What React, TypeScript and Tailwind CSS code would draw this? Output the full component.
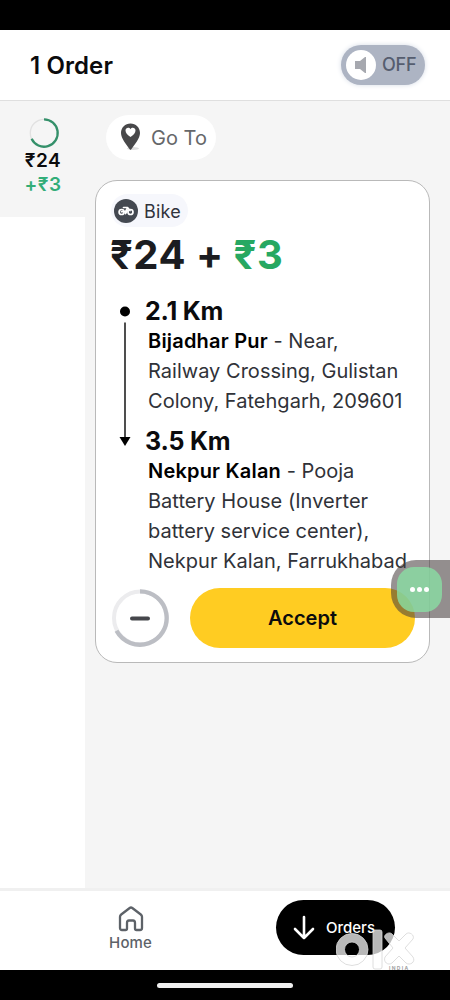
const ADDRESS = "whitespace-nowrap pl-[3px] text-[20px] leading-[30px] tracking-[0.02px] text-[#303238]";
const PLACE = "font-semibold tracking-[0.2px] text-black";
const DISTANCE = "text-[25px] font-bold leading-[30px] tracking-[-0.2px]";

function MapPin() {
  return (
    <svg width="22" height="28" viewBox="0 0 22 28" className="-mt-0.5 shrink-0">
      <ellipse cx="13" cy="25.500" rx="6" ry="1.500" fill="#dedede" />
      <path d="M10.500.5C5.200.5 1 4.600 1 10c0 5.600 5.500 11.500 8.700 16.300q.8 1 1.600 0C14.500 21.500 20 15.600 20 10 20 4.600 15.800.5 10.500.5z" fill="#48484a" />
      <path d="M10.500 14c-2.900-2-5-3.900-5-6.500 0-2.800 3.700-3.600 5-1.300 1.300-2.300 5-1.500 5 1.300 0 2.600-2.100 4.500-5 6.500z" fill="#fff" />
    </svg>
  );
}

function SoundToggle() {
  return (
    <button className="flex h-10 w-[84px] items-center rounded-full bg-[#adb4c3] pl-[5px] shadow-[0_0_5px_#d5dbe6]">
      <span className="flex h-[30px] w-[30px] items-center justify-center rounded-full bg-white">
        <svg width="14" height="18" viewBox="0 0 14 18" fill="#a6a8af">
          <path d="M1 5h5l5-4h1v16h-1l-5-4H1z" />
        </svg>
      </span>
      <span className="ml-[6px] text-[18px] font-medium leading-6 tracking-[-0.2px] text-[#555d6f]">OFF</span>
    </button>
  );
}

function BikeIcon() {
  return (
    <svg width="24" height="24" viewBox="0 0 24 24" className="shrink-0">
      <circle cx="12" cy="12" r="12" fill="#444951" />
      <g fill="none" stroke="#fff" strokeWidth="1.700" strokeLinecap="round" strokeLinejoin="round">
        <circle cx="7.600" cy="13" r="2.500" />
        <circle cx="16.500" cy="13" r="2.500" />
        <path d="M7.500 12.700h4l1.500-2.700M9.500 8.500h4l2.500 3M11.500 14.500l2-3" />
      </g>
    </svg>
  );
}

function Watermark() {
  return (
    <svg width="80" height="44" viewBox="0 0 80 44" className="absolute left-[336px] top-[929px]">
      <g stroke="#d5d5d5" strokeWidth=".8" fill="#fff" fillOpacity=".72">
        <path fillRule="evenodd" d="M16 4.500a16 16 0 1 0 0 32a16 16 0 1 0 0-32zM16 13a7.500 7.500 0 1 1 0 15a7.500 7.500 0 1 1 0-15z" />
        <rect x="37" y="1" width="9" height="39" rx="2" />
        <path d="M49 9c-2-3 4-7 7-4l7 7 7-7c3-3 9 1 7 5l-8 9 8 9c3 5-3 9-7 6l-7-7-7 7c-4 3-9-1-7-6l8-9z" />
      </g>
      <text x="53" y="41" fill="#a3a3a3" fontSize="5" fontWeight="700" fontFamily="Inter, sans-serif" letterSpacing="1.300">INDIA</text>
    </svg>
  );
}

export default function App() {
  return (
    <main className="relative flex h-[1000px] w-[450px] flex-col overflow-hidden bg-black font-['Inter',sans-serif] text-[#0b0b0d]">
      <div className="h-[30px] shrink-0 bg-black" />
      <header className="flex h-[71px] shrink-0 items-center justify-between border-b border-[#dfdfdf] bg-white pl-[30px] pr-[25px]">
        <h1 className="pt-0.5 text-[24px] font-semibold leading-8 tracking-[0.1px]">1 Order</h1>
        <SoundToggle />
      </header>

      <div className="flex h-[787px] shrink-0 bg-[#f5f5f5]">
        <aside className="flex w-[85px] flex-col">
          <div className="flex h-[116px] flex-col items-center pt-4">
            <svg width="32" height="32" viewBox="0 0 32 32" fill="none" className="ml-[3px]">
              <circle cx="16" cy="16" r="13.700" stroke="#e1e1e1" strokeWidth="1.300" />
              <path d="M16 2.300a13.700 13.700 0 1 1-12.400 19.500" stroke="#34906a" strokeWidth="2.300" />
            </svg>
            <strong className="ml-px mt-px text-[19px] font-semibold leading-[22px] tracking-[0.5px]">₹24</strong>
            <strong className="ml-px mt-[2px] text-[19px] font-semibold leading-[22px] tracking-[0.5px] text-[#32ad78]">+₹3</strong>
          </div>
          <div className="flex-1 bg-white" />
        </aside>

        <section className="flex w-[365px] flex-col pl-[10px] pt-[14px]">
          <button className="ml-[11px] flex h-[45px] w-[110px] items-center rounded-full bg-white pl-[14px]">
            <MapPin />
            <span className="ml-[9px] whitespace-nowrap text-[20px] text-[#66676a]">Go To</span>
          </button>

          <article className="mt-5 h-[483px] w-[335px] rounded-[22px] border border-[#b9b9b9] bg-white pl-[15px] pt-[13px]">
            <div className="flex h-[33px] w-[77px] items-center rounded-full bg-[#f6f7fc] pl-[3px]">
              <BikeIcon />
              <span className="ml-[6px] pt-px text-[18px] tracking-[0.2px] text-[#31333c]">Bike</span>
            </div>
            <div className="-ml-px mt-[3px] whitespace-nowrap text-[40px] font-bold leading-[50px] tracking-[0.5px] text-[#1b1c20]">
              ₹24 + <span className="text-[#27a862]">₹3</span>
            </div>

            <div className="mt-4 flex">
              <div className="flex w-[28px] flex-col items-center">
                <svg width="14" height="150" viewBox="0 0 14 150">
                  <circle cx="7" cy="15.500" r="5" fill="#000" />
                  <path d="M7 26.500v115" stroke="#222" strokeWidth="1.600" />
                  <path d="M1.500 141h11L7 150z" fill="#000" />
                </svg>
              </div>
              <div className="pl-[6px]">
                <h2 className={DISTANCE}>2.1 Km</h2>
                <p className={ADDRESS}>
                  <b className={PLACE}>Bijadhar Pur</b> - Near,<br />
                  Railway Crossing, Gulistan<br />
                  Colony, Fatehgarh, 209601
                </p>
                <h2 className={`mt-[10px] ${DISTANCE}`}>3.5 Km</h2>
                <p className={ADDRESS}>
                  <b className={PLACE}>Nekpur Kalan</b> - Pooja<br />
                  Battery House (Inverter<br />
                  battery service center),<br />
                  Nekpur Kalan, Farrukhabad
                </p>
              </div>
            </div>

            <div className="ml-px mt-3 flex items-center">
              <button aria-label="Decline">
                <svg width="58" height="60" viewBox="0 0 58 60" fill="none">
                  <circle cx="28.500" cy="30" r="26.500" stroke="#ececee" strokeWidth="4" />
                  <path d="M28 3.300a26.700 26.700 0 1 1-23.500 39.500" stroke="#bcbec4" strokeWidth="4.300" />
                  <path d="M20 30.500h16" stroke="#45464b" strokeWidth="4" strokeLinecap="round" />
                </svg>
              </button>
              <button className="ml-5 h-[60px] w-[225px] rounded-full bg-[#ffcc22] text-[20px] font-semibold">Accept</button>
            </div>
          </article>
        </section>
      </div>

      <nav className="flex h-[82px] shrink-0 border-t-[3px] border-[#f0f0f0] bg-white">
        <div className="flex w-[261px] flex-col items-center pt-[14px] text-[#5d6268]">
          <svg width="26" height="28" viewBox="0 0 26 28" fill="none" stroke="currentColor" strokeWidth="2.300" strokeLinejoin="round">
            <path d="M2 11.800Q2 10.500 3.200 9.500L11.700 3Q13 2 14.300 3L22.800 9.500Q24 10.500 24 11.800V23Q24 25 22 25H18.500Q17 25 17 23.500V18Q17 15.500 15 15.500H11Q9 15.500 9 18V23.500Q9 25 7.500 25H4Q2 25 2 23z" />
          </svg>
          <span className="text-[15px] font-medium leading-5 tracking-[0.1px]">Home</span>
        </div>
        <button className="ml-[15px] mt-[9px] flex h-[55px] w-[119px] items-center rounded-full bg-black pl-[17px] text-white">
          <svg width="22" height="26" viewBox="0 0 22 26" fill="none" stroke="currentColor" strokeWidth="2.600" strokeLinecap="round" strokeLinejoin="round">
            <path d="M11 2v21M2 14l9 9 9-9" />
          </svg>
          <span className="ml-[11px] pt-px text-[15px] font-medium">Orders</span>
        </button>
      </nav>

      <footer className="flex h-[30px] shrink-0 items-center bg-black pl-[157px]">
        <div className="h-[5px] w-[136px] rounded-full bg-[#efefef]" />
      </footer>

      <div className="absolute left-[391px] top-[560px] flex h-[58px] w-[59px] items-center rounded-l-[25px] bg-[rgba(70,60,60,0.56)] pl-[6px]">
        <div className="flex h-[45px] w-[45px] items-center justify-center gap-[2px] rounded-[17px] bg-[rgba(137,223,164,0.8)]">
          <i className="h-[5px] w-[5px] rounded-full bg-white" />
          <i className="h-[5px] w-[5px] rounded-full bg-white" />
          <i className="h-[5px] w-[5px] rounded-full bg-white" />
        </div>
      </div>
      <Watermark />
    </main>
  );
}
